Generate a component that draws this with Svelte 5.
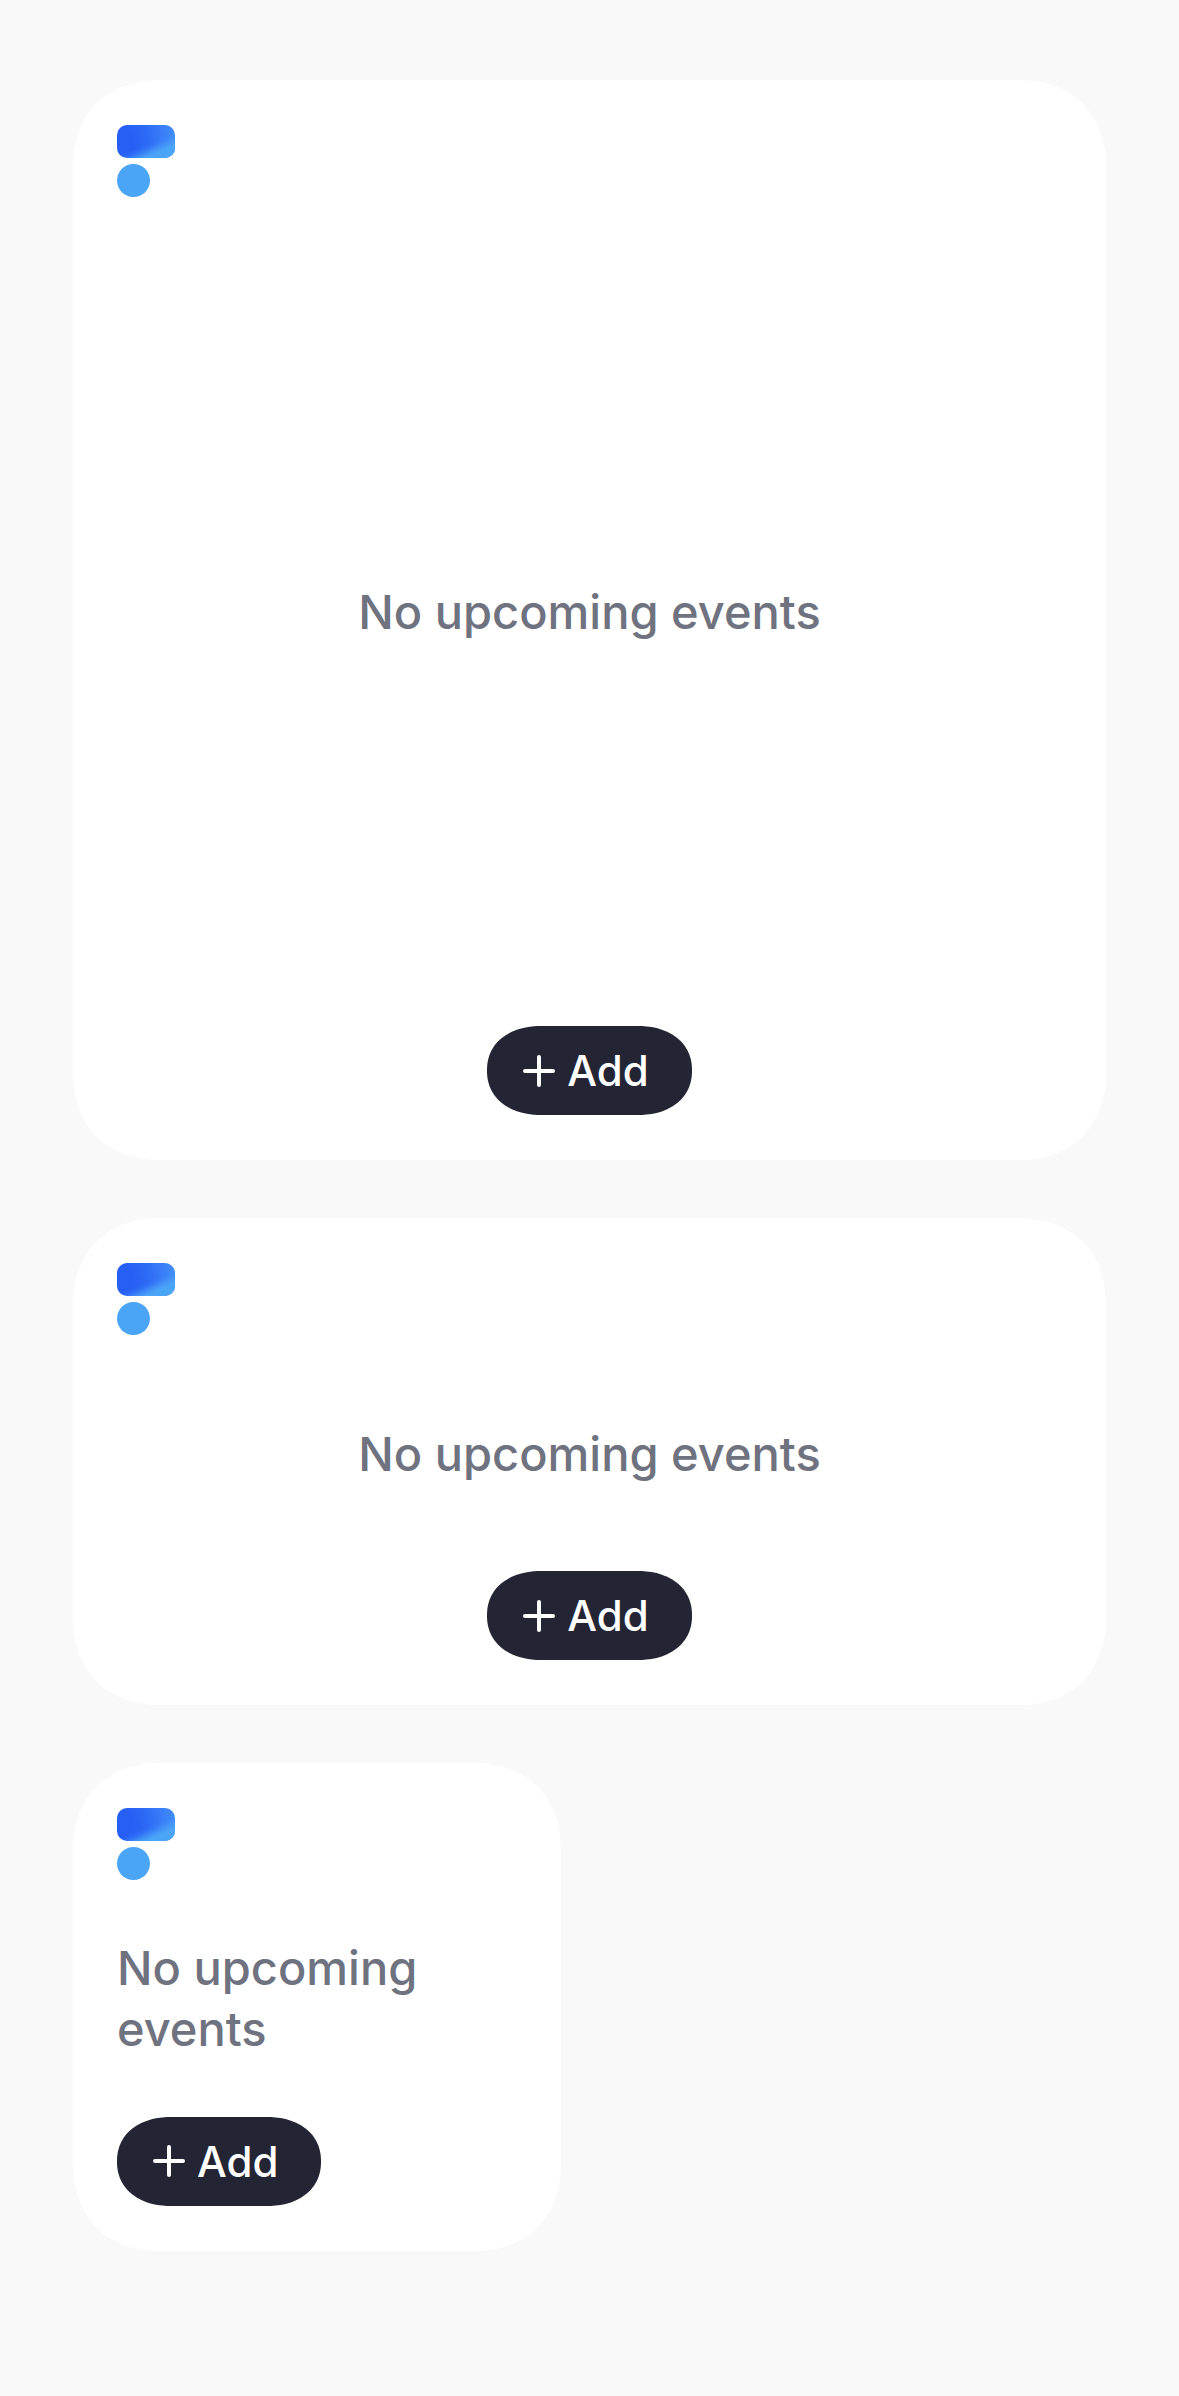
<script>
  const widgets = [
    { size: "large" },
    { size: "medium" },
    { size: "small" }
  ];

  let added = $state(0);

  function addEvent() {
    added += 1;
  }
</script>

<main class="widgets">
  {#each widgets as w (w.size)}
    <section class="widget {w.size}">
      <svg class="logo" viewBox="0 0 58 72" aria-hidden="true">
        <defs>
          <linearGradient id="base-{w.size}" x1="14" y1="14" x2="56" y2="4" gradientUnits="userSpaceOnUse">
            <stop offset="0" stop-color="#275ff5" />
            <stop offset="0.35" stop-color="#2d69f6" />
            <stop offset="1" stop-color="#418bf8" />
          </linearGradient>
          <linearGradient id="glow-{w.size}" x1="31" y1="18" x2="36" y2="30" gradientUnits="userSpaceOnUse">
            <stop offset="0" stop-color="#4ba5f7" stop-opacity="0" />
            <stop offset="0.3" stop-color="#4ba5f7" stop-opacity="0.15" />
            <stop offset="0.9" stop-color="#4ba5f7" stop-opacity="0.9" />
            <stop offset="1" stop-color="#4ba5f7" />
          </linearGradient>
        </defs>
        <rect width="58" height="33" rx="10" fill="url(#base-{w.size})" />
        <rect width="58" height="33" rx="10" fill="url(#glow-{w.size})" />
        <circle cx="16.5" cy="55.5" r="16.5" fill="#4ba5f7" />
      </svg>

      <p class="message">No upcoming events</p>

      <button class="add" type="button" onclick={addEvent}>
        <svg class="plus" viewBox="0 0 32 32" aria-hidden="true">
          <path d="M16 2v28M2 16h28" />
        </svg>
        Add
      </button>
    </section>
  {/each}
</main>

<style>
  :global(body) {
    margin: 0;
    background: #f9f9f9;
  }

  .widgets {
    display: grid;
    grid-template-columns: 1fr 1fr;
    gap: 58px;
    padding: 80px 73px;
    font-family: Inter, "Liberation Sans", sans-serif;
  }

  .widget {
    box-sizing: border-box;
    display: flex;
    flex-direction: column;
    align-items: center;
    padding: 45px 44px;
    border-radius: 88px;
    corner-shape: superellipse(1.15);
    background: #fff;
  }

  .large {
    grid-column: span 2;
    aspect-ratio: 1033 / 1080;
  }

  .medium {
    grid-column: span 2;
    aspect-ratio: 1033 / 487;
  }

  .small {
    align-items: flex-start;
    aspect-ratio: 1;
  }

  .logo {
    align-self: flex-start;
    width: 58px;
    height: 72px;
  }

  .message {
    margin: auto 0;
    color: #6f727f;
    font-size: 47px;
    font-weight: 500;
    line-height: 61px;
  }

  .add {
    display: flex;
    align-items: center;
    gap: 12px;
    height: 89px;
    padding: 0 43px 0 36px;
    border: none;
    border-radius: 54px / 44px;
    corner-shape: superellipse(1.12);
    background: #242534;
    color: #fff;
    font: inherit;
    font-size: 42px;
    font-weight: 500;
    cursor: pointer;
  }

  .plus {
    width: 32px;
    height: 32px;
    fill: none;
    stroke: #fff;
    stroke-width: 4;
    stroke-linecap: round;
  }
</style>
